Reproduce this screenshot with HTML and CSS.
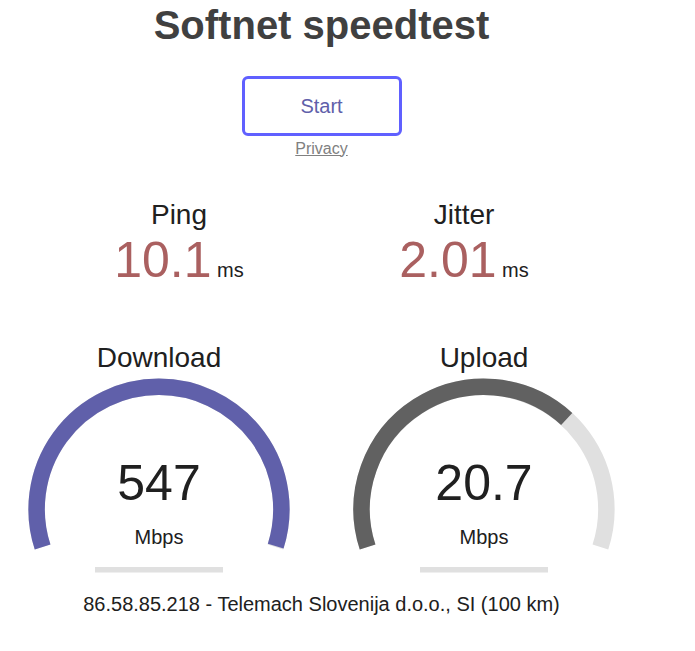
FILE: index.html
```
<!DOCTYPE html>
<html>
<head>
<meta charset="utf-8">
<title>Softnet speedtest</title>
<link rel="stylesheet" href="styles.css">
</head>
<body>
<div class="page">
  <h1 class="title">Softnet speedtest</h1>
  <div class="start-btn">Start</div>
  <div class="privacy-row"><a class="privacy" href="#">Privacy</a></div>

  <div class="group small-group">
    <div class="stat">
      <div class="stat-name">Ping</div>
      <div class="stat-value">10.1</div> <div class="stat-unit">ms</div>
    </div>
    <div class="stat">
      <div class="stat-name">Jitter</div>
      <div class="stat-value">2.01</div> <div class="stat-unit">ms</div>
    </div>
  </div>

  <div class="group gauge-group">
    <div class="gauge">
      <svg class="gauge-svg" width="320" height="250" viewBox="0 0 320 250">
        <path d="M 43.60 208.07 A 122.39 122.39 0 1 1 276.40 208.07" fill="none" stroke="#E0E0E0" stroke-width="16.5"/>
        <path d="M 43.60 208.07 A 122.39 122.39 0 1 1 276.71 207.11" fill="none" stroke="#6060AA" stroke-width="16.5"/>
        <rect x="96" y="228" width="128" height="5.5" fill="#E0E0E0"/>
      </svg>
      <div class="gauge-name">Download</div>
      <div class="gauge-value">547</div>
      <div class="gauge-unit">Mbps</div>
    </div>
    <div class="gauge">
      <svg class="gauge-svg" width="320" height="250" viewBox="0 0 320 250">
        <path d="M 43.60 208.07 A 122.39 122.39 0 1 1 276.40 208.07" fill="none" stroke="#E0E0E0" stroke-width="16.5"/>
        <path d="M 43.60 208.07 A 122.39 122.39 0 0 1 242.70 80.03" fill="none" stroke="#616161" stroke-width="16.5"/>
        <rect x="96" y="228" width="128" height="5.5" fill="#E0E0E0"/>
      </svg>
      <div class="gauge-name">Upload</div>
      <div class="gauge-value">20.7</div>
      <div class="gauge-unit">Mbps</div>
    </div>
  </div>

  <div class="ip">86.58.85.218 - Telemach Slovenija d.o.o., SI (100 km)</div>
</div>
</body>
</html>
```
FILE: styles.css
```
html, body {
  margin: 0;
  padding: 0;
  background: #ffffff;
}
body {
  font-family: "Liberation Sans", Arial, sans-serif;
  font-size: 20px;
  color: #202020;
}
.page {
  width: 643px;
  text-align: center;
}
.title {
  font-size: 40px;
  font-weight: bold;
  color: #404040;
  margin: 2.5px 0 28.5px;
  line-height: normal;
}
.start-btn {
  width: 160px;
  height: 60px;
  box-sizing: border-box;
  margin: 0 auto;
  border: 3px solid #6060FF;
  border-radius: 6px;
  color: #6060AA;
  line-height: 54px;
  font-size: 20px;
}
.privacy-row {
  margin-top: -0.5px;
  line-height: normal;
}
.privacy {
  font-size: 16px;
  color: #808080;
  text-decoration: underline;
}
.group {
  display: flex;
  justify-content: center;
  gap: 5px;
}
.small-group {
  margin-top: 40px;
}
.stat {
  width: 280px;
  height: 140px;
  text-align: center;
}
.stat-name {
  font-size: 28px;
  line-height: normal;
}
.stat-value {
  display: inline-block;
  font-size: 50px;
  color: #AA6060;
  line-height: normal;
}
.stat-unit {
  display: inline-block;
}
.gauge-group {
  margin-top: 0.5px;
}
.gauge {
  flex: none;
  width: 320px;
  height: 250px;
  display: grid;
  grid-template: 1fr / 1fr;
}
.gauge > * {
  grid-area: 1 / 1;
}
.gauge-svg {
  display: block;
}
.gauge-name {
  align-self: start;
  margin-top: 2.8px;
  font-size: 28px;
  line-height: normal;
}
.gauge-value {
  align-self: end;
  margin-bottom: 77.5px;
  font-size: 50px;
  line-height: normal;
}
.gauge-unit {
  align-self: end;
  margin-bottom: 40px;
  line-height: normal;
}
.ip {
  margin-top: 3.5px;
  line-height: normal;
}
```
